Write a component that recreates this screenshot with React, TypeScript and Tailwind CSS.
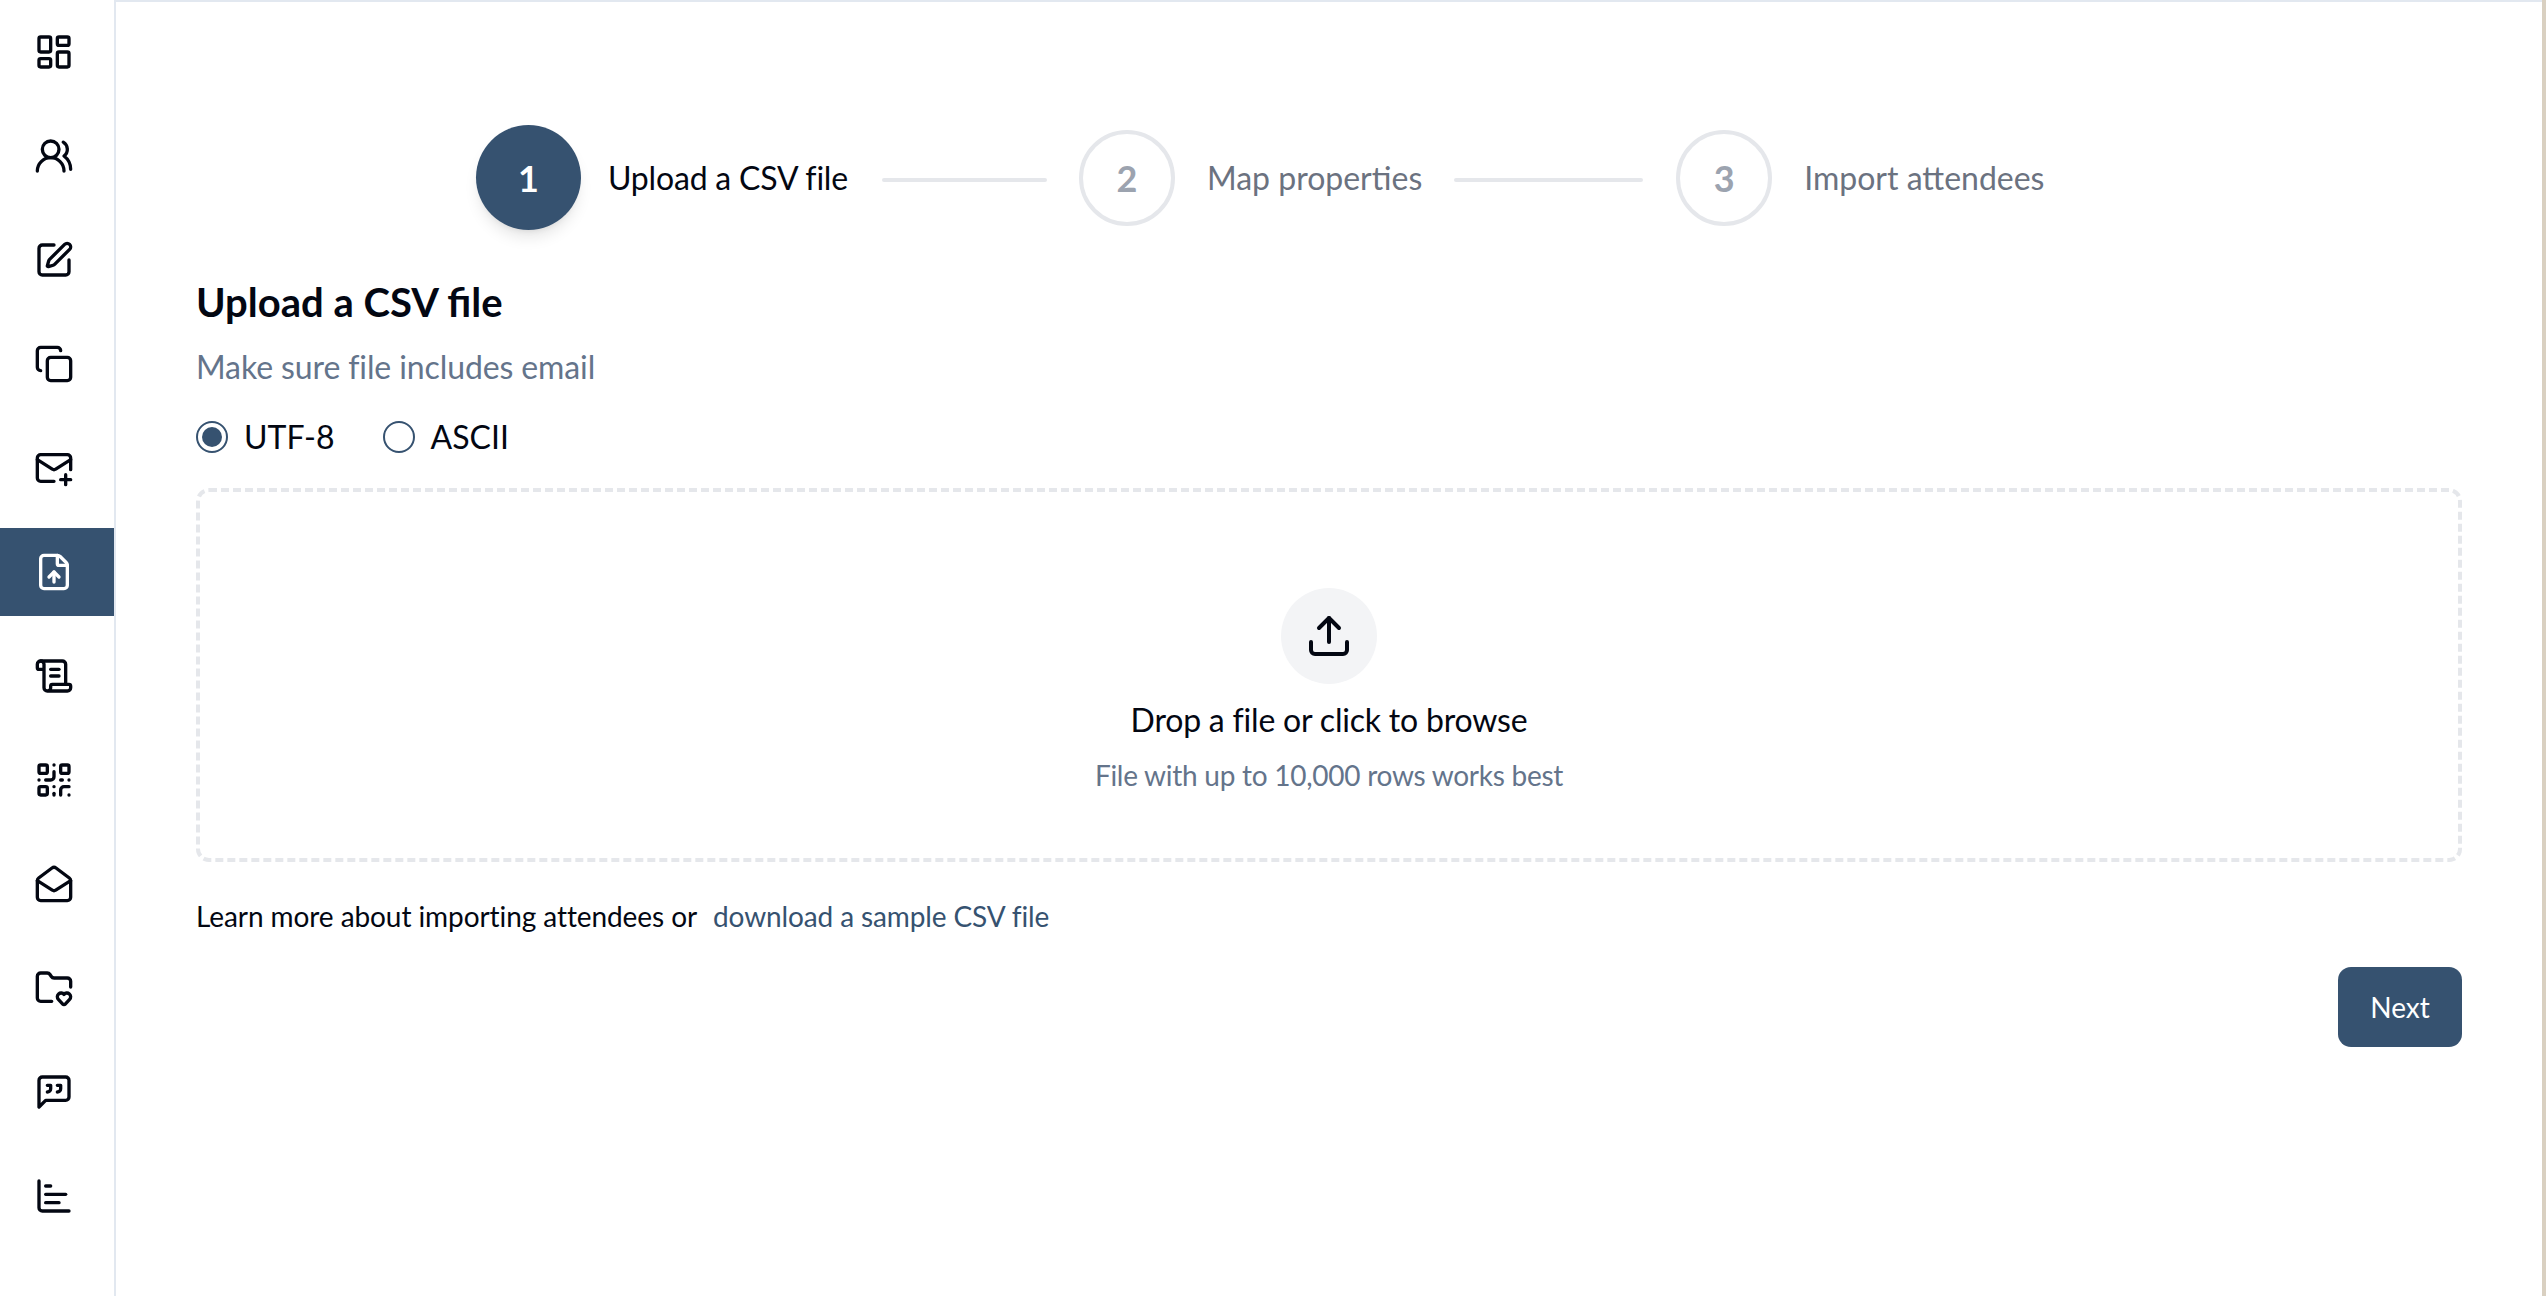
import React from "react";
import {
  LayoutDashboard, UsersRound, SquarePen, Copy, MailPlus, FileUp, ScrollText, QrCode,
  MailOpen, FolderHeart, ChartBar, Upload,
} from "lucide-react";

function QuoteIcon({ size = 40 }: { size?: number }) {
  return (
    <svg width={size} height={size} viewBox="0 0 24 24" fill="none" stroke="currentColor" strokeWidth={2} strokeLinecap="round" strokeLinejoin="round">
      <path d="M21 15a2 2 0 0 1-2 2H7l-4 4V5a2 2 0 0 1 2-2h14a2 2 0 0 1 2 2z" />
      <path d="M8 12a2 2 0 0 0 2-2V8H8" />
      <path d="M14 12a2 2 0 0 0 2-2V8h-2" />
    </svg>
  );
}

const nav = [LayoutDashboard, UsersRound, SquarePen, Copy, MailPlus, FileUp, ScrollText, QrCode, MailOpen, FolderHeart, QuoteIcon, ChartBar];

function Radio({ on, label }: { on?: boolean; label: string }) {
  return (
    <label className="flex items-center gap-[16px]">
      <span className="flex h-[32px] w-[32px] items-center justify-center rounded-full border-[2px] border-[#365270]">
        {on && <span className="h-[20px] w-[20px] rounded-full bg-[#365270]" />}
      </span>
      <span className="text-[32px] leading-[40px] text-[#030712]">{label}</span>
    </label>
  );
}

function Step({ n, label }: { n: number; label: string }) {
  return (
    <div className="flex items-center gap-[32px]">
      <div className="flex h-[96px] w-[96px] items-center justify-center rounded-full border-[4px] border-[#e5e7eb] text-[36px] font-bold text-[#9ca3af]">{n}</div>
      <span className="text-[32px] leading-[40px] text-[#6b7280]">{label}</span>
    </div>
  );
}

export default function App() {
  return (
    <div className="flex h-[1296px] w-full overflow-hidden bg-white font-['Lato','Liberation_Sans',sans-serif]">
      <aside className="flex w-[116px] shrink-0 flex-col gap-[16px] border-r-[2px] border-[#e2e8f0] pt-[8px] pr-[6px]">
        {nav.map((Icon, i) => (
          <div key={i} className={`flex h-[88px] w-[114px] items-center justify-center pr-[6px] ${i === 5 ? "bg-[#365270] text-white" : "text-[#030712]"}`}>
            <Icon size={40} />
          </div>
        ))}
      </aside>
      <main className="min-w-0 flex-1 border-t-[2px] border-[#e2e8f0] px-[80px] pt-[123px]">
        <div className="ml-[280px] flex h-[105px] items-center gap-[32px]">
          <div className="mr-[2px] flex items-center gap-[27px]">
            <div className="flex h-[105px] w-[105px] items-center justify-center rounded-full bg-[#365270] text-[36px] font-bold text-white shadow-lg">1</div>
            <span className="text-[32px] leading-[40px] tracking-[-0.19px] text-[#030712]">Upload a CSV file</span>
          </div>
          <div className="mt-[4px] h-[4px] w-[165px] rounded-full bg-[#e5e7eb]" />
          <Step n={2} label="Map properties" />
          <div className="mt-[4px] mr-[1px] h-[4px] w-[189px] rounded-full bg-[#e5e7eb]" />
          <Step n={3} label="Import attendees" />
        </div>
        <h1 className="mt-[48px] text-[40px] font-bold leading-[48px] text-[#030712]">Upload a CSV file</h1>
        <p className="mt-[21px] text-[32px] leading-[40px] tracking-[-0.11px] text-[#64748b]">Make sure file includes email</p>
        <div className="mt-[30px] flex h-[40px] items-center gap-[48px]">
          <Radio on label="UTF-8" />
          <Radio label="ASCII" />
        </div>
        <div className="mt-[31px] flex h-[374px] flex-col items-center rounded-[13px] border-[4px] border-dashed border-[#e5e7eb] pt-[96px]">
          <div className="flex h-[96px] w-[96px] items-center justify-center rounded-full bg-[#f3f4f6] text-[#030712]">
            <Upload size={48} strokeWidth={2} />
          </div>
          <p className="mt-[16px] text-[32px] leading-[40px] tracking-[-0.2px] text-[#030712]">Drop a file or click to browse</p>
          <p className="mt-[17px] text-[28px] leading-[36px] tracking-[-0.26px] text-[#64748b]">File with up to 10,000 rows works best</p>
        </div>
        <p className="mt-[36px] flex h-[36px] items-center text-[28px] leading-[36px] tracking-[-0.08px] text-[#030712]">
          <span>Learn more about importing attendees or</span>
          <a className="ml-[16px] tracking-[-0.12px] text-[#365270]">download a sample CSV file</a>
        </p>
        <div className="mt-[33px] flex justify-end">
          <button className="h-[80px] w-[124px] rounded-[13px] bg-[#365270] text-[28px] text-white">Next</button>
        </div>
      </main>
      <div className="w-[4px] shrink-0 bg-[#d9d0c1]" />
    </div>
  );
}
